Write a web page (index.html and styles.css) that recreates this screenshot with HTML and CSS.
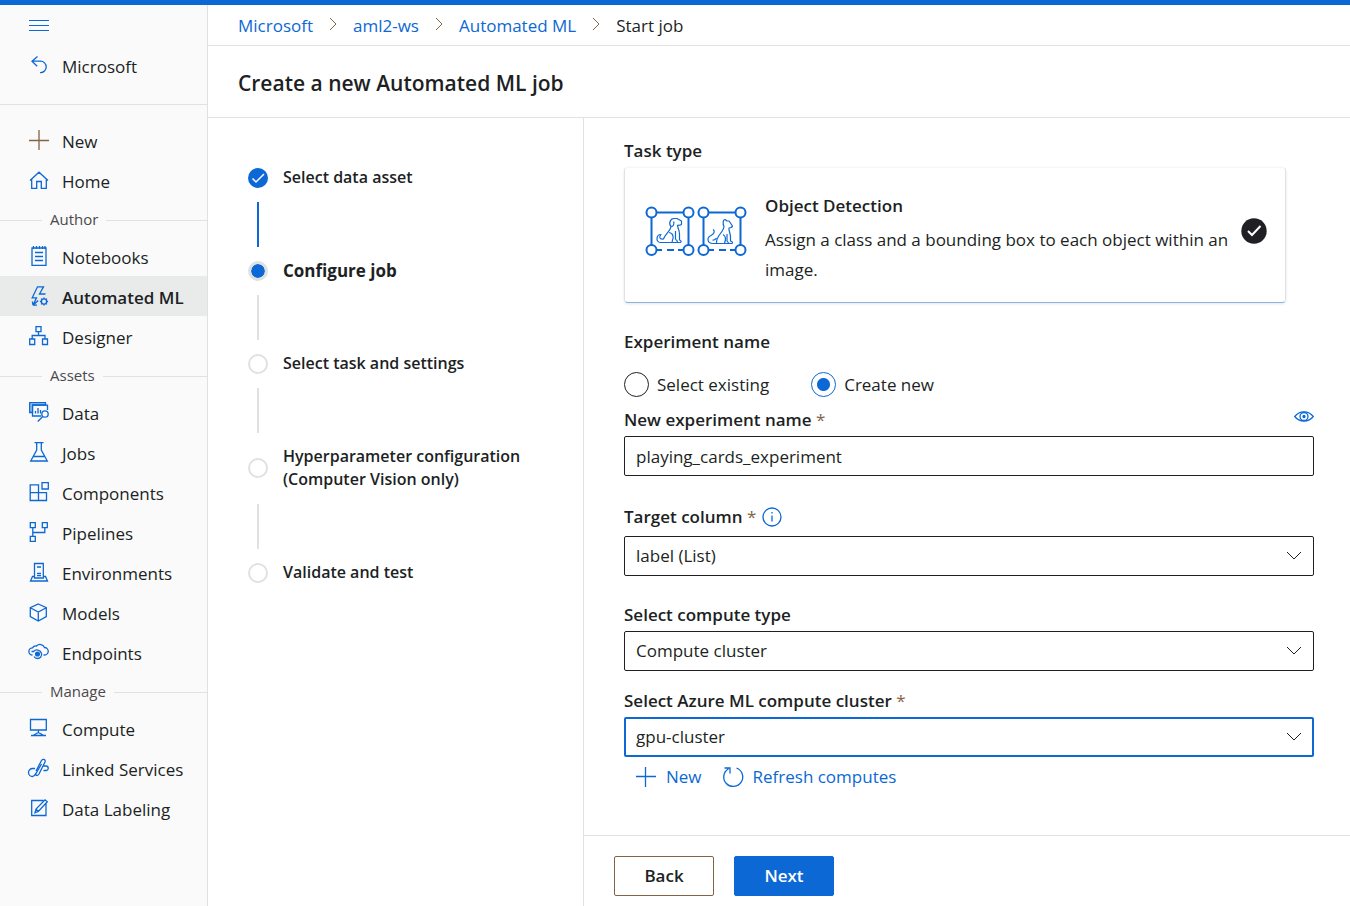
FILE: index.html
```html
<!DOCTYPE html>
<html lang="en">
<head>
<meta charset="utf-8">
<meta name="viewport" content="width=device-width, initial-scale=1">
<title>Create a new Automated ML job</title>
<link rel="stylesheet" href="styles.css">
</head>
<body>
<div class="app">
  <nav class="sidebar" aria-label="Workspace">
    <button class="menu-button" type="button" aria-label="Toggle navigation">
      <svg class="icon" viewBox="0 0 20 20"><path d="M0 5.5H20M0 10.5H20M0 15.5H20"/></svg>
    </button>
    <a class="nav-item nav-back" href="#">
      <svg class="icon" viewBox="0 0 20 20"><path d="M8.5 1.5 3 6.2l5.2 5M3.2 6.2H11.5a5.7 5.7 0 0 1 0 11.400H11"/></svg>
      <span>Microsoft</span>
    </a>
    <div class="nav-list">
      <a class="nav-item" href="#">
        <svg class="icon icon-brown" viewBox="0 0 20 20"><path d="M10 0V20M0 10.5H20"/></svg>
        <span>New</span>
      </a>
      <a class="nav-item" href="#">
        <svg class="icon" viewBox="0 0 20 20"><path d="M1 10.5 10 2.2l9 8.3M2.7 9.2V18.3H7.7V11.5H12.3V18.3H17.3V9.2"/></svg>
        <span>Home</span>
      </a>
      <div class="nav-section">Author</div>
      <a class="nav-item" href="#">
        <svg class="icon" viewBox="0 0 20 20"><path d="M3 2H17V19.3H3ZM4.5 0V3M7.5 0V3M10.5 0V3M13.5 0V3M16 0V3M6 6.5H14M6 10.5H14M6 14.5H14"/></svg>
        <span>Notebooks</span>
      </a>
      <a class="nav-item is-current" href="#" aria-current="page">
        <svg class="icon" viewBox="0 0 20 20"><path d="M16.5 8H10.5L14.5.8H8.5L3.2 11.8H7.5L4 19.2 9.2 14.5M4 19.2 3.4 15.5M4 19.2H8"/><circle cx="15" cy="15.5" r="2.6"/><path d="M15 11.4v1.5M15 18.1v1.5M10.9 15.5h1.5M17.6 15.5h1.5M12.1 12.6l1 1M16.9 17.4l1 1M17.9 12.6l-1 1M13.1 17.4l-1 1"/></svg>
        <span>Automated ML</span>
      </a>
      <a class="nav-item" href="#">
        <svg class="icon" viewBox="0 0 20 20"><path d="M7 .7h5v5H7ZM.7 13h5v5.5h-5ZM13.5 13h5v5.5h-5ZM9.5 5.7V9.5M3.2 13V9.5H16V13"/></svg>
        <span>Designer</span>
      </a>
      <div class="nav-section">Assets</div>
      <a class="nav-item" href="#">
        <svg class="icon" viewBox="0 0 20 20"><path class="tint" d="M.7.7H16.5V3H3.5V10.5H.7Z"/><path d="M12 14H3.5V3.2H18.5V8M6.5 11.5V9M9 11.5V6M11.5 11.5V8"/><circle cx="16" cy="12" r="3.2"/><path d="m13.7 14.5-5 5"/></svg>
        <span>Data</span>
      </a>
      <a class="nav-item" href="#">
        <svg class="icon" viewBox="0 0 20 20"><path d="M5.5.7H14.5M7.7.7V8L1.7 19H18.3L12.3 8V.7M4.5 14.5H15.5"/></svg>
        <span>Jobs</span>
      </a>
      <a class="nav-item" href="#">
        <svg class="icon" viewBox="0 0 20 20"><path d="M1.2 2.8H9.5V18.5H1.2ZM1.2 10.6H17.5V18.5H9.5M13 .7h6.3V7H13Z"/></svg>
        <span>Components</span>
      </a>
      <a class="nav-item" href="#">
        <svg class="icon" viewBox="0 0 20 20"><path d="M1.3.7h5v5h-5ZM13.3.7h5v5h-5ZM1.3 14.3h5v5h-5ZM3.8 5.7V14.3M15.8 5.7V10.5H3.8"/></svg>
        <span>Pipelines</span>
      </a>
      <a class="nav-item" href="#">
        <svg class="icon" viewBox="0 0 20 20"><path d="M5.5 16V1.5H14.3V16ZM5.5 14.5H3.5L1.5 19H18.5L16.5 14.5H14.3M8 5H12M8 11.5H12M8 13.7H12"/></svg>
        <span>Environments</span>
      </a>
      <a class="nav-item" href="#">
        <svg class="icon" viewBox="0 0 20 20"><path d="M9.3 2 17.3 5.7V14.5L9.3 19 1.3 14.5V5.7ZM1.3 5.7 9.3 10l8-4.3M9.3 10V19"/></svg>
        <span>Models</span>
      </a>
      <a class="nav-item" href="#">
        <svg class="icon" viewBox="0 0 20 20"><path d="M3.5 13A3.6 3.6 0 0 1 3.5 5.8 4 4 0 0 1 7.5 4 4.8 4.8 0 0 1 15.5 5.5 3.7 3.7 0 0 1 15.5 13H14.5M4.5 9.5A4.7 4.7 0 0 1 12.5 11.5 4 4 0 0 1 8.5 16.5 4 4 0 0 1 5 14.5M2.5 9.5H5"/><circle class="solid" cx="8.5" cy="12" r="1.9"/></svg>
        <span>Endpoints</span>
      </a>
      <div class="nav-section">Manage</div>
      <a class="nav-item" href="#">
        <svg class="icon" viewBox="0 0 20 20"><path d="M1.5 1.5H17.3V12H1.5ZM9.4 12V15M4 17.5 9.4 14.5l5.4 3ZM2 17.5H17"/></svg>
        <span>Compute</span>
      </a>
      <a class="nav-item" href="#">
        <svg class="icon" viewBox="0 0 20 20"><path d="M7 13 12.5 2.5C13.5.5 17 1.3 16 4L10 16C8.5 18.5 6 17.5 7 15.5L12.5 6M6 10.5H3.5A3.8 3.8 0 0 0 3.5 18.5C5.5 18.5 6 17 7 15M14.5 8H17A2.2 2.2 0 0 1 17 12.5H14.5"/></svg>
        <span>Linked Services</span>
      </a>
      <a class="nav-item" href="#">
        <svg class="icon" viewBox="0 0 20 20"><path d="M14.5 2.5H2.7V17.5H17V5.5M6 14.7 7 11 16 1.8 18.3 3.7 9.3 13.5ZM7 11l2.3 2.5"/></svg>
        <span>Data Labeling</span>
      </a>
    </div>
  </nav>

  <div class="workspace">
    <nav class="breadcrumb" aria-label="Breadcrumb">
      <a href="#">Microsoft</a>
      <svg class="crumb-chevron" viewBox="0 0 8 14"><path d="m1 1 6 6-6 6"/></svg>
      <a href="#">aml2-ws</a>
      <svg class="crumb-chevron" viewBox="0 0 8 14"><path d="m1 1 6 6-6 6"/></svg>
      <a href="#">Automated ML</a>
      <svg class="crumb-chevron" viewBox="0 0 8 14"><path d="m1 1 6 6-6 6"/></svg>
      <span aria-current="page">Start job</span>
    </nav>
    <header class="page-header"><h1>Create a new Automated ML job</h1></header>

    <div class="wizard">
      <ol class="steps">
        <li class="step is-done">
          <span class="step-marker"><svg viewBox="0 0 20 20"><path d="m4.5 10.5 3.5 3.5 8-8"/></svg></span>
          <span>Select data asset</span>
        </li>
        <li class="step is-active" aria-current="step"><span class="step-marker"></span><span>Configure job</span></li>
        <li class="step"><span class="step-marker"></span><span>Select task and settings</span></li>
        <li class="step"><span class="step-marker"></span><span>Hyperparameter configuration (Computer Vision only)</span></li>
        <li class="step"><span class="step-marker"></span><span>Validate and test</span></li>
      </ol>

      <form class="panel">
        <div class="panel-body">
          <h2 class="label">Task type</h2>
          <section class="task-card">
            <svg class="task-art" viewBox="0 0 102 51">
              <g class="art-frame">
                <path d="M6.5 6.5H43.5V44M6.5 6.5V44M58.5 6.5H95.5V44M58.5 6.5V44"/>
                <path d="M11 44H17M22 44H29M33 44H39M63 44H69M74 44H81M85 44H91"/>
                <circle cx="6.500" cy="6.500" r="5"/><circle cx="43.5" cy="6.5" r="5"/><circle cx="58.5" cy="6.5" r="5"/><circle cx="95.5" cy="6.5" r="5"/>
                <circle cx="6.5" cy="44" r="5"/><circle cx="43.5" cy="44" r="5"/><circle cx="58.5" cy="44" r="5"/><circle cx="95.5" cy="44" r="5"/>
              </g>
              <g class="art-animal">
                <path d="M18 36.5H15.5C10.5 36.5 11 28.5 16 28.5 14 31 14 33.5 18.5 33 19.5 29 25.5 25 26 20.5M26 20.5C23.5 18 25 12.5 29 12.5H32L36.5 15V18C36.5 19 34 19.3 32.5 19.3 32.5 22 34.5 24 34.5 28V34C36.5 34.5 36.5 36.5 35 36.5H18M26 20.5C28.5 20.5 29.3 18 28.7 15.5M24 26.5C28 27 29.5 31 27 36M30.5 25V33.5M30.5 33.5C32.5 34 32.5 36 32 36.5"/>
                <path d="M71.5 37.5H68C62 37.5 61.5 31.5 66 29.5 69 28 70.5 25 68 23.5M71.5 37.5C70.5 30 78.5 26.5 79 20.5 77.5 18 78 13.5 80 13.5L82 15H84L87.5 20C87 22 85.5 21.5 84 22 83.5 25 85.5 27 85.5 31V35C88 35.5 88 37.5 86.5 37.5H71.5M67.5 34C69.5 34.5 70.5 33.5 71.5 32M78 28.5C81 30 81 34 79.5 37M82 28V35L84 37.5"/>
              </g>
            </svg>
            <div class="task-text">
              <h3>Object Detection</h3>
              <p>Assign a class and a bounding box to each object within an image.</p>
            </div>
            <svg class="task-check" viewBox="0 0 26 26"><circle cx="13" cy="13" r="12.7"/><path d="m7 13 4 4 8.5-9"/></svg>
          </section>

          <fieldset class="radio-set">
            <legend class="label">Experiment name</legend>
            <div class="radio-row">
              <label class="radio"><input type="radio" name="experiment-mode" value="existing"><span>Select existing</span></label>
              <label class="radio"><input type="radio" name="experiment-mode" value="new" checked><span>Create new</span></label>
            </div>
          </fieldset>

          <div class="field">
            <div class="label-row label-spread">
              <label class="label" for="experiment-name">New experiment name <span class="required">*</span></label>
              <button class="icon-button" type="button" aria-label="Preview">
                <svg class="icon" viewBox="0 0 20 20"><path d="M.8 6.5C5.5.4 14.5.4 19.2 6.5 14.5 12.6 5.5 12.6.8 6.5Z"/><circle cx="10" cy="6.5" r="4"/><circle class="solid" cx="10" cy="6.5" r="1"/></svg>
              </button>
            </div>
            <input class="control" id="experiment-name" type="text" value="playing_cards_experiment">
          </div>

          <div class="field field-target">
            <div class="label-row">
              <label class="label" for="target-column">Target column <span class="required">*</span></label>
              <button class="icon-button" type="button" aria-label="About the target column">
                <svg class="icon" viewBox="0 0 20 20"><circle cx="10" cy="10" r="9"/><path d="M10 8.5V14.5M10 5V6.5"/></svg>
              </button>
            </div>
            <div class="select-box">
              <select class="control" id="target-column"><option>label (List)</option></select>
              <svg class="select-chevron" viewBox="0 0 16 9"><path d="m1 1 7 7 7-7"/></svg>
            </div>
          </div>

          <div class="field field-type">
            <label class="label" for="compute-type">Select compute type</label>
            <div class="select-box">
              <select class="control" id="compute-type"><option>Compute cluster</option></select>
              <svg class="select-chevron" viewBox="0 0 16 9"><path d="m1 1 7 7 7-7"/></svg>
            </div>
          </div>

          <div class="field field-cluster">
            <label class="label" for="compute-cluster">Select Azure ML compute cluster <span class="required">*</span></label>
            <div class="select-box">
              <select class="control is-focused" id="compute-cluster"><option>gpu-cluster</option></select>
              <svg class="select-chevron" viewBox="0 0 16 9"><path d="m1 1 7 7 7-7"/></svg>
            </div>
          </div>

          <div class="actions">
            <button class="link-button" type="button">
              <svg class="icon" viewBox="0 0 20 20"><path d="M9.5 0V20M0 9.5H20"/></svg>
              <span>New</span>
            </button>
            <button class="link-button" type="button">
              <svg class="icon" viewBox="0 0 20 20"><path d="M13.5 1A9.5 9.5 0 1 1 5.5 1.7M1.500 1H7V6.5"/></svg>
              <span>Refresh computes</span>
            </button>
          </div>
        </div>
        <footer class="panel-footer">
          <button class="button" type="button">Back</button>
          <button class="button button-primary" type="submit">Next</button>
        </footer>
      </form>
    </div>
  </div>
</div>
</body>
</html>
```

FILE: styles.css
```css
:root {
  --blue: #0c68d4;
  --ink: #201f24;
  --line: #e0e2e2;
  --brown: #856345;
}

* { box-sizing: border-box; }

body {
  margin: 0;
  font: 17px/24px "Open Sans", "Noto Sans", sans-serif;
  color: var(--ink);
  background: #fff;
}

h1, h2, h3, p, ol, fieldset, legend { margin: 0; padding: 0; }
a { color: var(--blue); text-decoration: none; }
button, input, select { font: inherit; color: inherit; }
svg { display: block; flex: none; }

.app {
  display: grid;
  grid-template-columns: 208px minmax(0, 1fr);
  min-height: 100vh;
  border-top: 5px solid var(--blue);
}

.icon {
  width: 20px;
  height: 20px;
  fill: none;
  stroke: var(--blue);
  stroke-width: 1.3;
  overflow: visible;
}
.icon-brown { stroke: var(--brown); }
.icon .solid { fill: var(--blue); }
.icon .tint { fill: #a9cbef; }

/* Sidebar */
.sidebar {
  background: #fafafa;
  border-right: 1px solid var(--line);
}
.menu-button {
  display: flex;
  align-items: center;
  height: 40px;
  padding: 0 29px;
  border: 0;
  background: none;
}
.menu-button .icon { stroke-width: 1; }
.nav-item {
  display: flex;
  align-items: center;
  gap: 13px;
  height: 40px;
  padding-left: 29px;
  color: var(--ink);
  white-space: nowrap;
}
.nav-item span { padding-top: 4px; }
.nav-item.is-current {
  background: #e9ebeb;
  font-weight: 600;
}
.nav-list {
  margin-top: 19px;
  padding-top: 15px;
  border-top: 1px solid var(--line);
}
.nav-section {
  display: flex;
  align-items: center;
  gap: 8px;
  height: 36px;
  padding-top: 2px;
  font-size: 15px;
  color: #4b494c;
}
.nav-section::before,
.nav-section::after {
  content: "";
  height: 1px;
  margin-top: 2px;
  background: var(--line);
}
.nav-section::before { width: 42px; }
.nav-section::after { flex: 1; }

/* Header */
.workspace {
  display: flex;
  flex-direction: column;
  min-width: 0;
}
.breadcrumb {
  display: flex;
  align-items: center;
  gap: 16px;
  height: 41px;
  padding-left: 30px;
  border-bottom: 1px solid var(--line);
}
.breadcrumb a,
.breadcrumb span { padding-top: 2px; }
.crumb-chevron {
  width: 8px;
  height: 14px;
  margin-bottom: 2px;
  fill: none;
  stroke: var(--brown);
}
.page-header {
  display: flex;
  align-items: center;
  height: 72px;
  padding: 2px 30px 0;
  border-bottom: 1px solid var(--line);
}
h1 {
  font-size: 21px;
  line-height: 30px;
  font-weight: 600;
}

/* Wizard steps */
.wizard {
  flex: 1;
  display: grid;
  grid-template-columns: 376px minmax(0, 1fr);
}
.steps {
  padding: 48px 40px;
  border-right: 1px solid var(--line);
  list-style: none;
}
.step {
  display: grid;
  grid-template-columns: 20px minmax(0, 1fr);
  align-items: center;
  column-gap: 15px;
  font-size: 16px;
  line-height: 23px;
  font-weight: 600;
}
.step:not(:last-child)::after {
  content: "";
  width: 2px;
  height: 45px;
  margin: 13px 0 12px 9px;
  background: var(--line);
}
.step-marker {
  width: 20px;
  height: 20px;
  border: 2px solid var(--line);
  border-radius: 50%;
}
.step.is-done .step-marker {
  border: 0;
  background: var(--blue);
}
.step.is-done::after { background: var(--blue); }
.step.is-active {
  font-size: 17px;
  font-weight: 700;
}
.step.is-active .step-marker {
  border-width: 3px;
  background: var(--blue) padding-box;
}
.step-marker svg {
  fill: none;
  stroke: #fff;
  stroke-width: 1.5;
}

/* Form */
.panel {
  display: flex;
  flex-direction: column;
}
.panel-body {
  flex: 1;
  padding: 21px 36px 19px 40px;
}
.label {
  display: block;
  font-size: 17px;
  line-height: 24px;
  font-weight: 600;
}
.required {
  color: var(--brown);
  font-weight: 400;
}
.task-card {
  display: flex;
  align-items: flex-start;
  min-height: 136px;
  margin: 4px 28px 27px 0;
  padding: 23px 18px 16px 20px;
  border: 1px solid var(--line);
  border-top-color: #f6f6f6;
  border-bottom-color: #8ab3e3;
  border-radius: 4px;
  box-shadow: 0 1px 3px #0000001a;
}
.task-art {
  width: 102px;
  height: 51px;
  margin: 15px 18px 0 0;
  fill: none;
  stroke: var(--blue);
}
.art-frame { stroke-width: 2; }
.art-frame circle { fill: #fff; }
.art-animal { stroke-width: 1.2; stroke-linejoin: round; }
.task-text { flex: 1; }
.task-text h3 {
  font-size: 17px;
  line-height: 30px;
  font-weight: 600;
  margin-bottom: 4px;
}
.task-text p { line-height: 30px; }
.task-check {
  width: 26px;
  height: 26px;
  margin: 27px 0 0 4px;
  fill: var(--ink);
}
.task-check path {
  fill: none;
  stroke: #fff;
  stroke-width: 2;
}

.radio-set { border: 0; }
.radio-row {
  display: flex;
  gap: 42px;
  padding-top: 18px;
}
.radio {
  display: flex;
  align-items: center;
  gap: 8px;
}
.radio input {
  appearance: none;
  width: 25px;
  height: 25px;
  margin: 0;
  border: 1px solid var(--ink);
  border-radius: 50%;
}
.radio input:checked {
  border-color: var(--blue);
  background: radial-gradient(circle, var(--blue) 6px, transparent 7px);
}

.label-row {
  display: flex;
  align-items: center;
  gap: 6px;
}
.label-spread { justify-content: space-between; }
.icon-button {
  padding: 0;
  border: 0;
  background: none;
}
.field { padding-top: 11px; }
.field .control { margin-top: 4px; }
.field-target { padding-top: 29px; }
.field-target .control { margin-top: 7px; }
.field-type { padding-top: 27px; }
.field-cluster { padding-top: 18px; }
.control {
  display: block;
  width: 100%;
  height: 40px;
  padding: 0 11px;
  border: 1px solid var(--ink);
  border-radius: 2px;
  background: #fff;
  appearance: none;
}
.control.is-focused {
  padding: 0 10px;
  border: 2px solid var(--blue);
}
.select-box { position: relative; }
.select-chevron {
  position: absolute;
  right: 12px;
  bottom: 16px;
  width: 16px;
  height: 9px;
  fill: none;
  stroke: var(--ink);
  pointer-events: none;
}
.actions {
  display: flex;
  gap: 21px;
  padding: 8px 12px;
}
.link-button {
  display: flex;
  align-items: center;
  gap: 10px;
  padding: 0;
  border: 0;
  background: none;
  color: var(--blue);
}

.panel-footer {
  display: flex;
  gap: 20px;
  padding: 20px 30px 10px;
  border-top: 1px solid var(--line);
}
.button {
  width: 100px;
  height: 40px;
  padding: 0;
  border: 1px solid var(--brown);
  border-radius: 2px;
  background: #fff;
  font-weight: 600;
}
.button-primary {
  border-color: var(--blue);
  background: var(--blue);
  color: #fff;
}
```
